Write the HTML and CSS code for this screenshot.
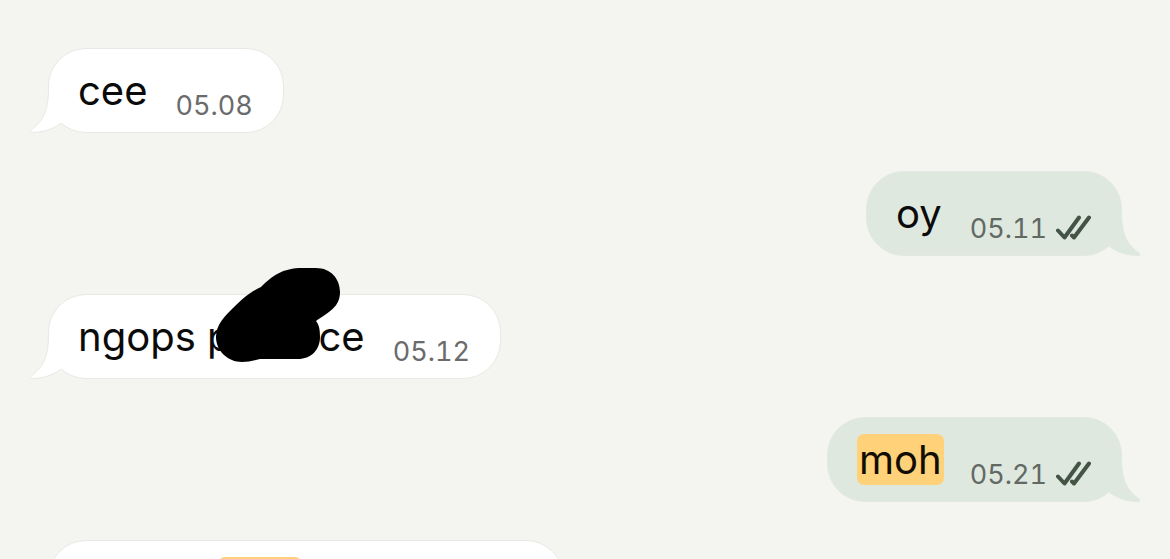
FILE: index.html
```
<!DOCTYPE html>
<html lang="id">
<head>
    <meta charset="UTF-8">
    <meta name="viewport" content="width=device-width, initial-scale=1.0">
    <title>Chat</title>
    <link rel="stylesheet" href="styles.css">
</head>
<body>
    <!-- Shared shapes -->
    <svg class="symbols" aria-hidden="true">
        <symbol id="tail" viewBox="0 0 40 46">
            <path class="tail-fill" d="M19.5 0 C19.5 24 14 33 1.5 42.5 C0.5 43.5 1 44.5 3 44.5 C14 44.5 24 41 31.5 35.5 L40 28 L40 0 Z"/>
            <path class="tail-line" d="M19.5 0 C19.5 24 14 33 1.5 42.5 C0.5 43.5 1 44.5 3 44.5 C14 44.5 24 41 31.5 35.5"/>
        </symbol>
        <symbol id="checks" viewBox="0 0 36 26">
            <path d="M3 15.5 L9.5 22.5 L24 2.5"/>
            <path d="M17 20.5 L19 22.5 L34 2.5"/>
        </symbol>
    </svg>

    <main class="chat">
        <div class="message incoming">
            <svg class="tail"><use href="#tail"/></svg>
            <span class="text">cee</span>
            <time class="time">05.08</time>
        </div>

        <div class="message outgoing">
            <svg class="tail"><use href="#tail"/></svg>
            <span class="text">oy</span>
            <time class="time">05.11</time>
            <svg class="checks" role="img" aria-label="Read"><use href="#checks"/></svg>
        </div>

        <div class="message incoming">
            <svg class="tail"><use href="#tail"/></svg>
            <span class="text">ngops p<span class="redacted"><svg class="scribble" viewBox="0 0 126 97" aria-hidden="true">
                <path d="M1 71 C1 59 9 51 17 43 C28 32 35 26 46 21 C57 10 67 2 88 2 L101 2 C116 2 125 13 125 26 C125 41 114 46 101 55 C104 59 105 63 105 71 C105 84 96 93 83 93 L45 93 C38 95 33 96 27 96 C13 96 1 85 1 71 Z"/>
            </svg></span>ce</span>
            <time class="time">05.12</time>
        </div>

        <div class="message outgoing">
            <svg class="tail"><use href="#tail"/></svg>
            <mark class="text">moh</mark>
            <time class="time">05.21</time>
            <svg class="checks" role="img" aria-label="Read"><use href="#checks"/></svg>
        </div>

        <div class="message incoming wide">
            <svg class="tail"><use href="#tail"/></svg>
            <mark class="text"></mark>
        </div>
    </main>
</body>
</html>
```
FILE: styles.css
```
* {
    box-sizing: border-box;
}

body {
    margin: 0;
    background-color: #f4f5f0;
    font-family: Inter, Roboto, sans-serif;
    color: #0b0b0b;
}

.symbols {
    position: absolute;
    width: 0;
    height: 0;
}

.chat {
    display: flex;
    flex-direction: column;
    gap: 38px;
    height: 100vh;
    padding: 48px 48px 0;
    overflow: hidden;
}

.message {
    position: relative;
    display: flex;
    flex-shrink: 0;
    align-items: flex-end;
    padding: 16px 30px 10px 29px;
    border: 1px solid #e8e8e4;
    border-radius: 38px;
}

.incoming {
    align-self: flex-start;
    background-color: #fff;
    --bubble: #fff;
    --edge: #e8e8e4;
}

.outgoing {
    align-self: flex-end;
    background-color: #dee8df;
    border-color: #e2e9e2;
    --bubble: #dee8df;
    --edge: #e2e9e2;
}

.text {
    margin-bottom: 6px;
    font-size: 40px;
    line-height: 51px;
    white-space: nowrap;
}

.time {
    margin-left: 28px;
    font-size: 27px;
    line-height: 32px;
    font-variant-numeric: tabular-nums;
    color: #6b6b6b;
}

.outgoing .time {
    color: #626963;
}

mark {
    min-width: 84px;
    height: 51px;
    padding: 0 2px;
    border-radius: 7px;
    background-color: #ffd279;
    color: #120d02;
}

mark + .time {
    margin-left: 26px;
}

.checks {
    width: 36px;
    height: 26px;
    margin: 0 0 4px 8px;
    fill: none;
    stroke: #435445;
    stroke-width: 4;
    stroke-linecap: round;
    stroke-linejoin: round;
}

/* Tail sits over the lower corner of the bubble */
.tail {
    position: absolute;
    left: -20px;
    bottom: -2px;
    width: 40px;
    height: 46px;
}

.outgoing .tail {
    left: auto;
    right: -20px;
    transform: scaleX(-1);
}

.tail-fill {
    fill: var(--bubble);
}

.tail-line {
    fill: none;
    stroke: var(--edge);
}

.redacted {
    position: relative;
    display: inline-block;
    width: 87px;
    height: 1px;
}

.scribble {
    position: absolute;
    left: -17px;
    bottom: -12px;
    width: 126px;
    height: 97px;
}

.wide {
    width: 48%;
    padding-left: 169px;
}
```
